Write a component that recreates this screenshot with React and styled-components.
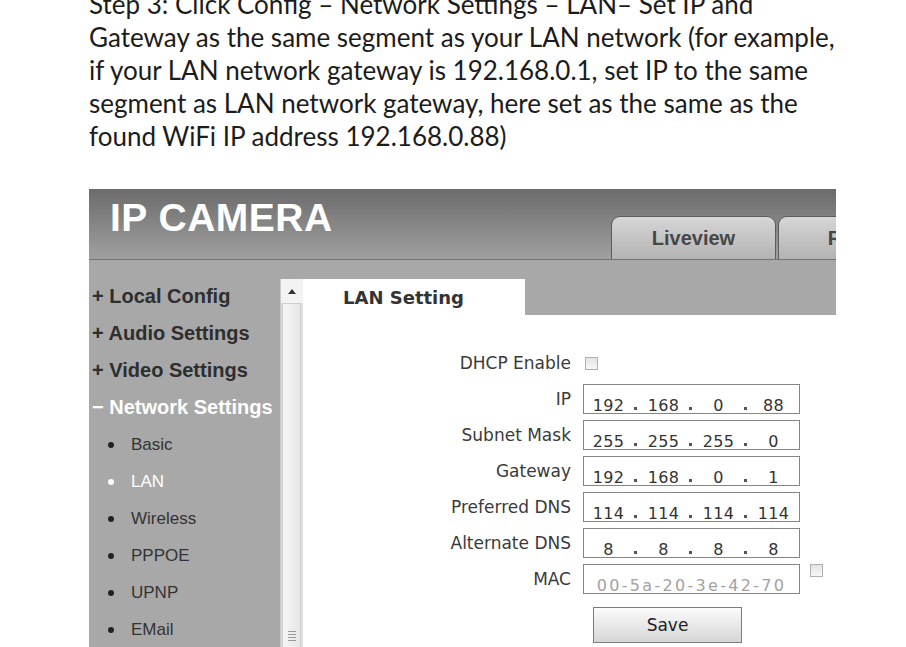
import React from 'react';
import styled, { createGlobalStyle } from 'styled-components';

const GlobalStyle = createGlobalStyle`
  html, body {
    margin: 0;
    padding: 0;
    background: #fff;
    overflow: hidden;
  }
`;

const Page = styled.div`
  width: 906px;
  height: 647px;
  overflow: hidden;
  padding-left: 89px;
  box-sizing: border-box;
`;

const Intro = styled.p`
  margin: -12px 0 0;
  font-family: Lato, "Open Sans", sans-serif;
  font-size: 26px;
  line-height: 33px;
  color: #1c1c1c;
  white-space: nowrap;
`;

const Shot = styled.div`
  width: 747px;
  height: 480px;
  margin-top: 36px;
  overflow: hidden;
  background: #a8a8a8;
  font-family: "Liberation Sans", Arial, sans-serif;
`;

const Header = styled.div`
  height: 71px;
  box-sizing: border-box;
  display: flex;
  padding-left: 21px;
  border-bottom: 1px solid #737373;
  background: linear-gradient(#6b6b6b, #a0a0a0);
`;

const Title = styled.div`
  flex: 0 0 501px;
  margin-top: 9px;
  font-size: 39px;
  line-height: 39px;
  font-weight: bold;
  color: #fff;
  letter-spacing: 0.5px;
`;

const Tabs = styled.div`
  display: flex;
  flex-shrink: 0;
  align-items: flex-end;
  gap: 2px;
`;

const Tab = styled.div`
  width: 165px;
  height: 43px;
  box-sizing: border-box;
  flex-shrink: 0;
  display: flex;
  align-items: center;
  justify-content: center;
  border: 1px solid #5c5c5c;
  border-bottom: none;
  border-radius: 9px 9px 0 0;
  background: linear-gradient(#d6d6d6, #b3b3b3);
  color: #474747;
  font-size: 20px;
  font-weight: bold;
`;

const Body = styled.div`
  display: flex;
  padding-top: 19px;
  height: 100%;
`;

const Sidebar = styled.div`
  width: 191px;
  flex-shrink: 0;
  margin-top: -1px;
`;

const MenuItem = styled.div`
  height: 37px;
  display: flex;
  align-items: center;
  padding-left: 3px;
  font-size: 20px;
  font-weight: bold;
  color: ${({ $active }) => ($active ? '#fff' : '#2e2e2e')};
  white-space: nowrap;
`;

const SubItem = styled.div`
  height: 37px;
  display: flex;
  align-items: center;
  padding-left: 19px;
  font-size: 17px;
  color: ${({ $active }) => ($active ? '#fff' : '#333')};
`;

const Bullet = styled.span`
  width: 6px;
  height: 6px;
  border-radius: 50%;
  background: ${({ $active }) => ($active ? '#fff' : '#222')};
  margin-right: 17px;
`;

const Scrollbar = styled.div`
  width: 23px;
  flex-shrink: 0;
  display: flex;
  flex-direction: column;
  background: #dedede;
  border-left: 1px solid #cacaca;
  box-sizing: border-box;
`;

const ScrollUp = styled.div`
  height: 24px;
  display: flex;
  align-items: center;
  justify-content: center;
  background: #f3f3f3;
`;

const Thumb = styled.div`
  flex: 1;
  margin: 0 2px 0 1px;
  display: flex;
  flex-direction: column;
  align-items: center;
  border: 1px solid #cfcfcf;
  background: linear-gradient(90deg, #f6f6f6, #e6e6e6);
`;

const Grip = styled.div`
  margin-top: 327px;
  width: 8px;
  display: flex;
  flex-direction: column;
  gap: 2px;
  & span {
    height: 1px;
    background: #9a9a9a;
  }
`;

const Content = styled.div`
  flex: 1;
  background: #fff;
  display: flex;
  flex-direction: column;
`;

const ContentTop = styled.div`
  display: flex;
  height: 36px;
`;

const PageTab = styled.div`
  width: 222px;
  padding-left: 40px;
  box-sizing: border-box;
  display: flex;
  align-items: center;
  font-family: "DejaVu Sans", Verdana, sans-serif;
  font-size: 18px;
  font-weight: bold;
  color: #333;
`;

const Filler = styled.div`
  flex: 1;
  background: #a8a8a8;
`;

const Form = styled.div`
  padding-top: 30px;
  font-family: "DejaVu Sans", Verdana, sans-serif;
  color: #3a3a3a;
`;

const Row = styled.div`
  height: 36px;
  display: flex;
  align-items: center;
`;

const Label = styled.div`
  width: 268px;
  flex-shrink: 0;
  margin-right: 12px;
  text-align: right;
  font-size: 17px;
  white-space: nowrap;
`;

const Check = styled.span`
  width: 11px;
  height: 11px;
  margin-left: ${({ $gap }) => $gap}px;
  align-self: ${({ $top }) => ($top ? 'flex-start' : 'center')};
  margin-top: ${({ $top }) => ($top ? '3px' : '0')};
  border: 1px solid #b0b0b0;
  background: linear-gradient(#e4e4e4, #f7f7f7);
`;

const Field = styled.div`
  width: 217px;
  height: 30px;
  box-sizing: border-box;
  display: flex;
  align-items: flex-end;
  justify-content: ${({ $center }) => ($center ? 'center' : 'flex-start')};
  border: 1px solid #868686;
  font-size: 16px;
  line-height: 14px;
  color: ${({ $muted }) => ($muted ? '#a2a2a2' : '#333')};
  letter-spacing: ${({ $muted }) => ($muted ? '2.3px' : '0.3px')};
`;

const Seg = styled.span`
  width: 45px;
  text-align: center;
  padding-left: 2px;
`;

const Dot = styled.span`
  width: 8px;
  height: 14px;
  display: flex;
  align-items: center;
  justify-content: center;
  &::after {
    content: '';
    width: 3px;
    height: 3px;
    margin-top: 4px;
    background: #555;
  }
`;

const SaveButton = styled.button`
  margin: 10px 0 0 290px;
  width: 149px;
  height: 36px;
  border: 1px solid #7c7c7c;
  background: linear-gradient(#fbfbfb, #d6d6d6);
  font-family: "DejaVu Sans", Verdana, sans-serif;
  font-size: 17px;
  color: #222;
  padding: 0;
`;

const menu = ['Local Config', 'Audio Settings', 'Video Settings'];
const subMenu = ['Basic', 'LAN', 'Wireless', 'PPPOE', 'UPNP', 'EMail'];

const addresses = [
  { label: 'IP', value: ['192', '168', '0', '88'] },
  { label: 'Subnet Mask', value: ['255', '255', '255', '0'] },
  { label: 'Gateway', value: ['192', '168', '0', '1'] },
  { label: 'Preferred DNS', value: ['114', '114', '114', '114'] },
  { label: 'Alternate DNS', value: ['8', '8', '8', '8'] },
];

const IpField = ({ value }) => (
  <Field>
    {value.map((part, i) => (
      <React.Fragment key={i}>
        <Seg>{part}</Seg>
        {i < value.length - 1 && <Dot />}
      </React.Fragment>
    ))}
  </Field>
);

const App = () => {
  return (
    <>
      <GlobalStyle />
      <Page>
        <Intro>
          Step 3: Click Config – Network Settings – LAN– Set IP and
          <br />
          Gateway as the same segment as your LAN network (for example,
          <br />
          if your LAN network gateway is 192.168.0.1, set IP to the same
          <br />
          segment as LAN network gateway, here set as the same as the
          <br />
          found WiFi IP address 192.168.0.88)
        </Intro>

        <Shot>
          <Header>
            <Title>IP CAMERA</Title>
            <Tabs>
              <Tab>Liveview</Tab>
              <Tab>Replay</Tab>
            </Tabs>
          </Header>

          <Body>
            <Sidebar>
              {menu.map((item) => (
                <MenuItem key={item}>+ {item}</MenuItem>
              ))}
              <MenuItem $active>− Network Settings</MenuItem>
              {subMenu.map((item) => (
                <SubItem key={item} $active={item === 'LAN'}>
                  <Bullet $active={item === 'LAN'} />
                  {item}
                </SubItem>
              ))}
            </Sidebar>

            <Scrollbar>
              <ScrollUp>
                <svg width="8" height="5" viewBox="0 0 8 5">
                  <path d="M0 5 L4 0 L8 5 Z" fill="#333" />
                </svg>
              </ScrollUp>
              <Thumb>
                <Grip>
                  <span />
                  <span />
                  <span />
                  <span />
                </Grip>
              </Thumb>
            </Scrollbar>

            <Content>
              <ContentTop>
                <PageTab>LAN Setting</PageTab>
                <Filler />
              </ContentTop>
              <Form>
                <Row>
                  <Label>DHCP Enable</Label>
                  <Check $gap={2} />
                </Row>
                {addresses.map((a) => (
                  <Row key={a.label}>
                    <Label>{a.label}</Label>
                    <IpField value={a.value} />
                  </Row>
                ))}
                <Row>
                  <Label>MAC</Label>
                  <Field $center $muted>00-5a-20-3e-42-70</Field>
                  <Check $gap={10} $top />
                </Row>
                <SaveButton>Save</SaveButton>
              </Form>
            </Content>
          </Body>
        </Shot>
      </Page>
    </>
  );
};

export default App;
